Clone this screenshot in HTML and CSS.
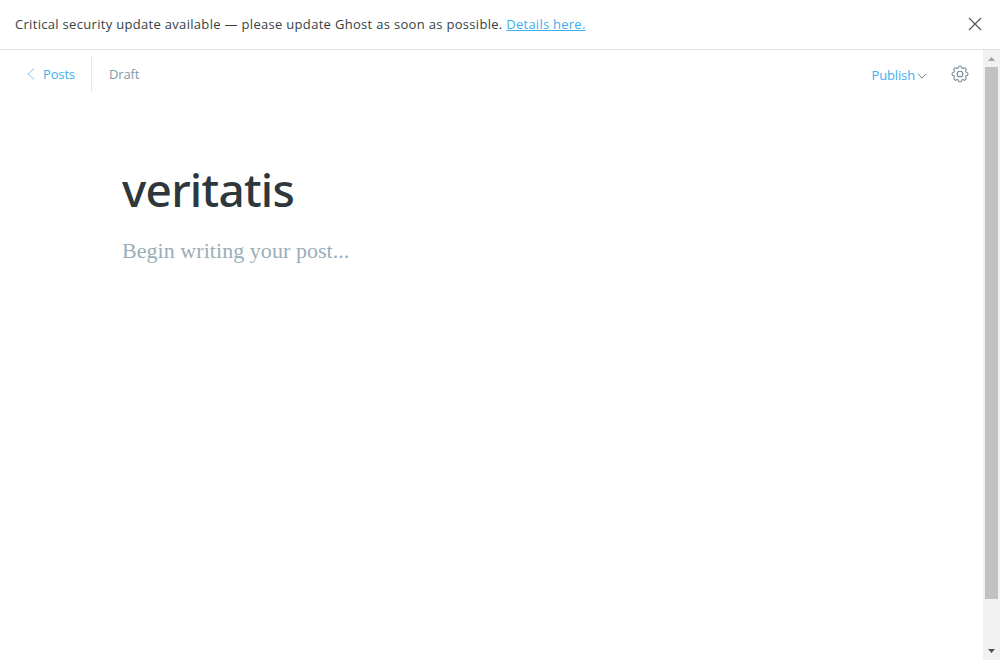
FILE: index.html
```html
<!DOCTYPE html>
<html lang="en">
<head>
<meta charset="utf-8">
<title>Editor</title>
<link rel="stylesheet" href="styles.css">
</head>
<body>
<div class="alert">
  <p class="alert-text"><span class="alert-message">Critical security update available — please update Ghost as soon as possible.</span> <a class="alert-link" href="#">Details here.</a></p>
  <button class="alert-close" aria-label="Close"><svg width="14" height="14" viewBox="0 0 14 14"><path d="M1 1l12 12M13 1L1 13"/></svg></button>
</div>
<div class="workspace">
  <main class="editor">
    <header class="toolbar">
      <a class="back" href="#"><svg width="8" height="12" viewBox="0 0 8 12"><path d="M7 .7L1 6l6 5.3"/></svg><span>Posts</span></a>
      <span class="status">Draft</span>
      <button class="publish"><span>Publish</span><svg width="10" height="6" viewBox="0 0 10 6"><path d="M1 .7L5 5.100 9 .7"/></svg></button>
      <button class="settings" aria-label="Settings"><svg width="18" height="18" viewBox="0 0 18 18"><circle cx="9" cy="9" r="2.8"/><path d="M7.5 2.3Q7.7 1 9 1t1.5 1.3Q10.9 3.9 12.3 3.2 13.7 2.3 14.7 3.3t.1 2.4Q14.1 7.1 15.7 7.5 17 7.7 17 9t-1.3 1.5Q14.1 10.9 14.8 12.3q.9 1.4-.1 2.4t-2.4.1Q10.9 14.1 10.5 15.7 10.3 17 9 17t-1.5-1.3Q7.1 14.1 5.7 14.8q-1.4.9-2.4-.1t-.1-2.4Q3.9 10.9 2.3 10.5 1 10.3 1 9t1.3-1.5Q3.9 7.1 3.2 5.7q-.9-1.4.1-2.4t2.4-.1Q7.1 3.9 7.5 2.3z"/></svg></button>
    </header>
    <article class="post">
      <h1 class="post-title">veritatis</h1>
      <p class="post-body">Begin writing your post...</p>
    </article>
  </main>
  <div class="scrollbar">
    <svg class="arrow" width="17" height="17" viewBox="0 0 17 17"><path fill="#a3a3a3" d="M5 11h7L8.500 7z"/></svg>
    <div class="thumb"></div>
    <svg class="arrow" width="17" height="17" viewBox="0 0 17 17"><path fill="#505050" d="M5 6h7L8.500 10z"/></svg>
  </div>
</div>
</body>
</html>
```
FILE: styles.css
```css
* { box-sizing: border-box; }
body {
  margin: 0;
  height: 660px;
  display: flex;
  flex-direction: column;
  overflow: hidden;
  background: #fff;
  font-family: "Open Sans", "Noto Sans", sans-serif;
  font-size: 13px;
}
a { color: #3eb0ef; text-decoration: none; }
p, h1 { margin: 0; }
button { padding: 0; border: 0; background: none; font: inherit; letter-spacing: inherit; }
svg { display: block; fill: none; flex: none; }

.alert {
  height: 50px;
  flex: none;
  display: flex;
  align-items: center;
  justify-content: space-between;
  padding: 0 18px 1px 15px;
  border-bottom: 1px solid #dfe1e3;
  color: #343f44;
}
.alert-text { font-size: 13px; letter-spacing: .31px; line-height: 20px; white-space: nowrap; }
.alert-link { letter-spacing: .25px; text-decoration: underline; }
.alert-close svg { stroke: #4c5357; stroke-width: 1.1; }

.workspace { flex: 1; display: flex; min-height: 0; }
.editor { flex: 1; }
.toolbar { display: flex; align-items: center; height: 48px; padding: 0 14px 0 27px; letter-spacing: -.15px; }
.back {
  display: flex;
  align-items: center;
  gap: 8px;
  width: 65px;
  height: 36px;
  border-right: 1px solid #dfe8ef;
}
.back svg { stroke: #78c9f4; }
.status { margin-left: 17px; color: #829aa8; }
.publish { display: flex; align-items: center; gap: 2px; margin-left: auto; padding-top: 2px; color: #3eb0ef; }
.publish svg { stroke: #738a94; margin-top: 2px; }
.settings { margin-left: 24px; }
.settings svg { stroke: #738a94; stroke-width: 1.1; }

.post { padding: 59px 122px; }
.post-title {
  font-family: "Noto Sans", "Open Sans", sans-serif;
  font-size: 46px;
  font-weight: 500;
  letter-spacing: -.75px;
  line-height: 64px;
  color: #2d373c;
}
.post-body {
  margin-top: 14px;
  font-family: Georgia, "Liberation Serif", serif;
  font-size: 22px;
  letter-spacing: .05px;
  line-height: 32px;
  color: #9baeb8;
}

.scrollbar { width: 17px; display: flex; flex-direction: column; background: #f1f1f1; }
.thumb { height: 532px; margin: 0 2px auto; background: #c1c1c1; }
```
